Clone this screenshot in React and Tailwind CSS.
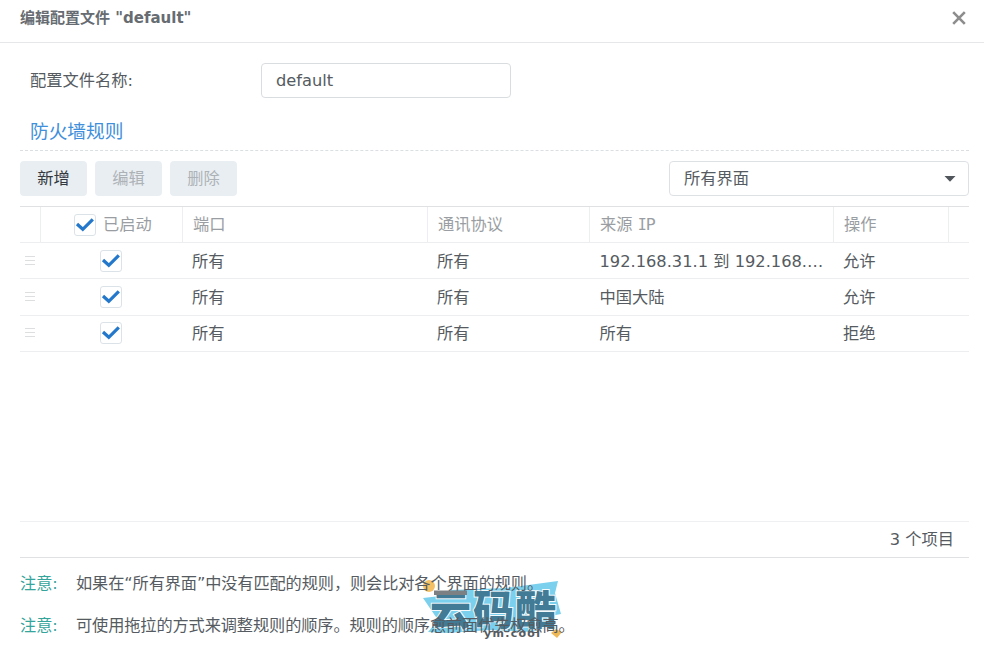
import { useState } from "react";

const columns = "grid grid-cols-[21px_142px_245px_162px_244px_115px_1fr]";

const initialRules = [
  { id: 1, enabled: true, port: "所有", protocol: "所有", source: "192.168.31.1 到 192.168.…", action: "允许" },
  { id: 2, enabled: true, port: "所有", protocol: "所有", source: "中国大陆", action: "允许" },
  { id: 3, enabled: true, port: "所有", protocol: "所有", source: "所有", action: "拒绝" },
];

const notes = [
  "如果在“所有界面”中没有匹配的规则，则会比对各个界面的规则。",
  "可使用拖拉的方式来调整规则的顺序。规则的顺序愈前面优先权愈高。",
];

function Checkbox({ checked, onClick }) {
  return (
    <button
      type="button"
      onClick={onClick}
      className="flex h-[22px] w-[22px] shrink-0 items-center justify-center rounded-[3px] border border-[#dce3e8] bg-white"
    >
      {checked && (
        <svg width="20" height="20" viewBox="0 0 20 20" fill="none">
          <path d="M2 9L7.8 14.3L17.8 4.3" stroke="#2478cc" strokeWidth="3.2" />
        </svg>
      )}
    </button>
  );
}

function DragHandle() {
  return (
    <svg width="10" height="10" viewBox="0 0 10 10" stroke="#dcdee0" strokeWidth="1">
      <path d="M0 0.5H10M0 4.5H10M0 8.5H10" />
    </svg>
  );
}

function Watermark() {
  return (
    <svg
      className="pointer-events-none absolute left-[420px] top-[575px]"
      width="145"
      height="70"
      viewBox="0 0 145 70"
    >
      <path
        d="M3 23L29 20L31 15L86 13L138 6L135 18L141 39L130 41L134 50L112 57L70 55L28 58L8 57L18 45Z"
        fill="#7bd0ee"
      />
      <circle cx="9" cy="11" r="6" fill="#f3c164" />
      <path d="M131 58L136 54L142 57L137 63Z" fill="#f0b957" />
      <g
        fontFamily="'Noto Sans CJK SC', sans-serif"
        fontWeight="900"
        fontSize="41"
        fill="#417b96"
        stroke="#f4fafc"
        strokeWidth="2"
        paintOrder="stroke"
      >
        <text x="10" y="50">云</text>
        <text x="53" y="50">码</text>
        <text x="95" y="50">酷</text>
      </g>
      <path d="M14 15.5H47V20H14Z" fill="#7c8083" />
      <text
        x="64"
        y="62"
        fontFamily="'DejaVu Sans', sans-serif"
        fontWeight="700"
        fontSize="11"
        textLength="56"
        fill="#565b5f"
      >
        ym.cool
      </text>
    </svg>
  );
}

function App() {
  const [name, setName] = useState("default");
  const [rules, setRules] = useState(initialRules);

  const allEnabled = rules.every((rule) => rule.enabled);

  const toggleRule = (id) => {
    setRules(rules.map((rule) => (rule.id === id ? { ...rule, enabled: !rule.enabled } : rule)));
  };

  const toggleAll = () => {
    setRules(rules.map((rule) => ({ ...rule, enabled: !allEnabled })));
  };

  return (
    <div className="relative flex h-[645px] w-[984px] flex-col overflow-hidden bg-white font-['DejaVu_Sans','Noto_Sans_CJK_SC',sans-serif] text-[16.25px] leading-6 text-[#555b61]">
      <Watermark />

      {/* Title bar */}
      <div className="flex h-[43px] shrink-0 items-center justify-between border-b border-[#e6e7e8] pb-[6px] pl-5 pr-[18px]">
        <h1 className="text-[15px] font-bold text-[#666c71]">编辑配置文件 "default"</h1>
        <button type="button">
          <svg width="14" height="14" viewBox="0 0 14 14" stroke="#8d8d8d" strokeWidth="2.6">
            <path d="M1.2 1.2L12.8 12.8M12.8 1.2L1.2 12.8" />
          </svg>
        </button>
      </div>

      <div className="flex flex-1 flex-col pl-5 pr-[15px]">
        {/* Profile name */}
        <div className="mt-5 flex h-[35px] items-center pl-[10px]">
          <label className="w-[231px] pt-px">配置文件名称:</label>
          <input
            value={name}
            onChange={(e) => setName(e.target.value)}
            className="h-[35px] w-[250px] rounded-[4px] border border-[#d9dde0] px-[14px] outline-none"
          />
        </div>

        <h2 className="mt-[19px] h-[34px] border-b border-dashed border-[#dcdfe1] pl-[10px] pt-[3px] text-[18.7px] leading-[24px] text-[#3f8fdb]">
          防火墙规则
        </h2>

        {/* Toolbar */}
        <div className="mt-[10px] flex h-[35px] items-center justify-between">
          <div className="flex gap-2">
            <button type="button" className="h-[35px] w-[67px] rounded-[4px] bg-[#e9eef2] text-[#32383e]">新增</button>
            <button type="button" className="h-[35px] w-[67px] rounded-[4px] bg-[#e9eef2] text-[#adb2b7]">编辑</button>
            <button type="button" className="h-[35px] w-[67px] rounded-[4px] bg-[#e9eef2] text-[#adb2b7]">删除</button>
          </div>
          <button
            type="button"
            className="flex h-[35px] w-[300px] items-center justify-between rounded-[4px] border border-[#dde1e4] pl-[14px] pr-3"
          >
            所有界面
            <svg width="12" height="6" viewBox="0 0 12 6" fill="#50565c">
              <path d="M0.5 0H11.5L6 5.8Z" />
            </svg>
          </button>
        </div>

        {/* Rule table */}
        <div className="mt-[10px] border-t border-[#dfe1e3]">
          <div className={`${columns} h-[36px] border-b border-[#eceeef] text-[#9a9ea2]`}>
            <div className="border-r border-[#eceeef]" />
            <div className="flex items-center gap-[7px] border-r border-[#eceeef] pl-[33px]">
              <Checkbox checked={allEnabled} onClick={toggleAll} />
              已启动
            </div>
            <div className="flex items-center border-r border-[#eceeef] pl-[10px]">端口</div>
            <div className="flex items-center border-r border-[#eceeef] pl-[10px]">通讯协议</div>
            <div className="flex items-center whitespace-pre border-r border-[#eceeef] pl-[10px]">
              来源 <span className="font-['DejaVu_Sans_Mono',monospace] text-[15px] -tracking-[1px]">I</span>P
            </div>
            <div className="flex items-center border-r border-[#eceeef] pl-[10px]">操作</div>
          </div>

          {rules.map((rule) => (
            <div key={rule.id} className={`${columns} h-[36.3px] items-center border-b border-[#eceeef]`}>
              <div className="pl-[5px]">
                <DragHandle />
              </div>
              <div className="flex justify-center pr-[2px]">
                <Checkbox checked={rule.enabled} onClick={() => toggleRule(rule.id)} />
              </div>
              <div className="pl-[9px] pt-[2px]">{rule.port}</div>
              <div className="pl-[9px] pt-[2px]">{rule.protocol}</div>
              <div className="whitespace-nowrap pl-[9.5px] pt-[2px]">{rule.source}</div>
              <div className="pl-[9px] pt-[2px]">{rule.action}</div>
            </div>
          ))}
        </div>

        {/* Item count */}
        <div className="mt-auto flex h-[37px] items-center justify-end border-b border-t border-b-[#dfe1e3] border-t-[#eff0f1] pr-[15px]">
          3 个项目
        </div>

        {/* Notes */}
        <div className="relative h-[87px] pt-[5px] text-[16.2px]">
          {notes.map((note) => (
            <div key={note} className="flex h-[42px] items-center whitespace-nowrap">
              <span className="w-14 text-[#35a49b]">注意:</span>
              <span className="tracking-[-0.1px]">{note}</span>
            </div>
          ))}
        </div>
      </div>
    </div>
  );
}

export default App;
